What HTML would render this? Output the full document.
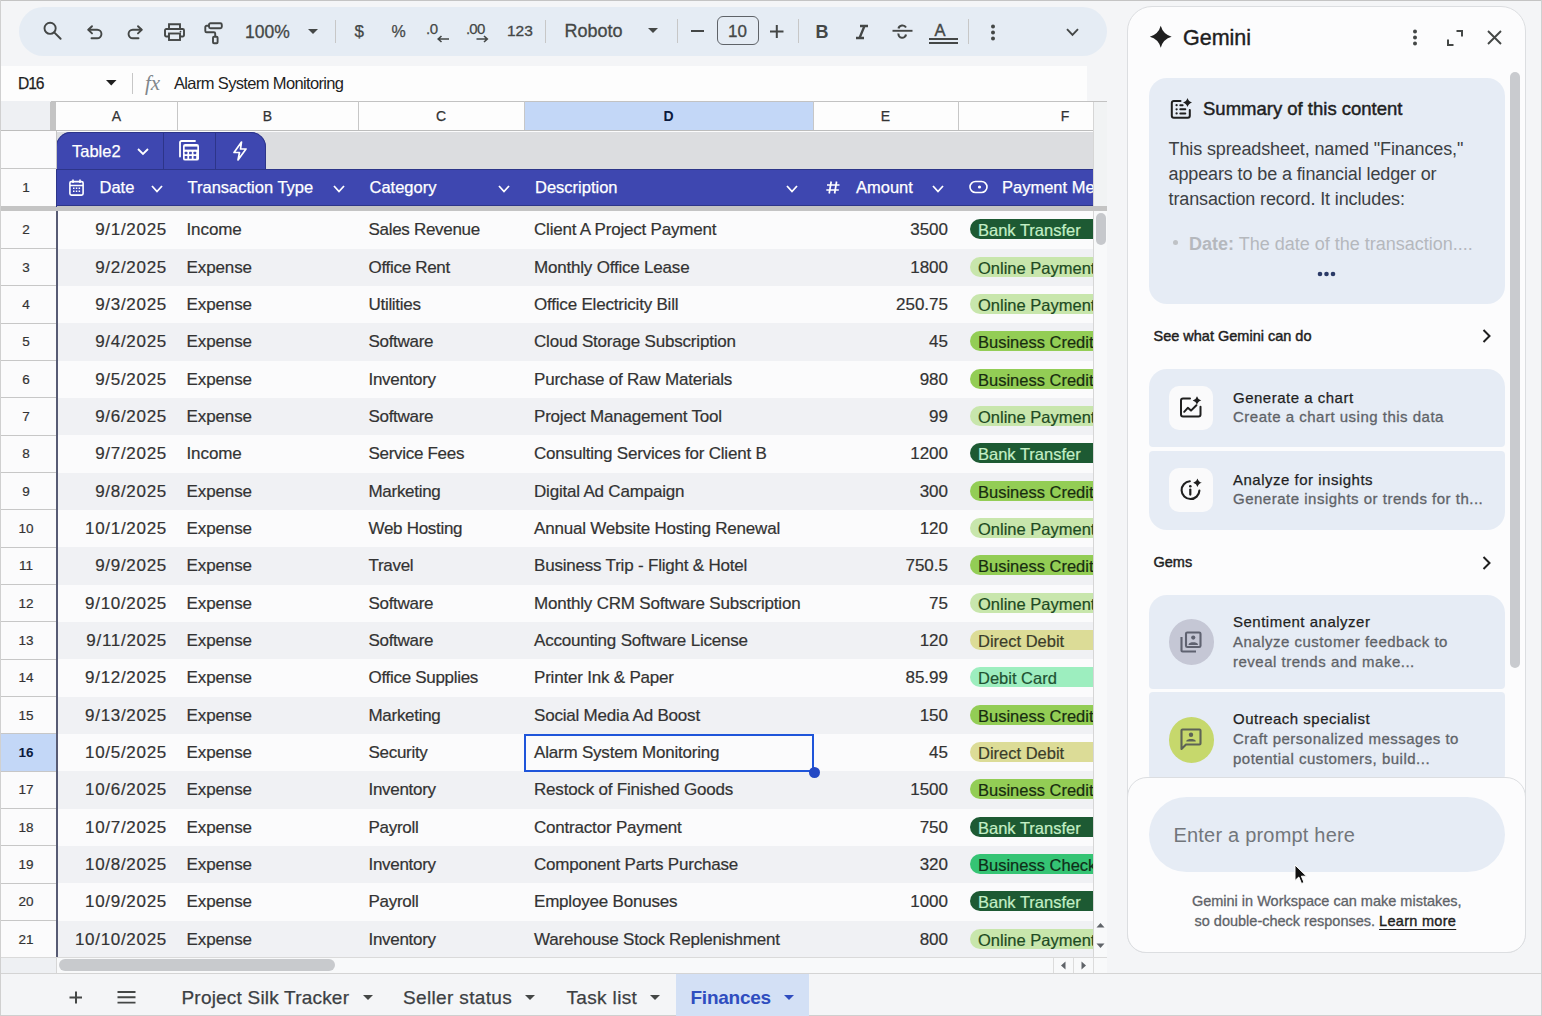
<!DOCTYPE html>
<html><head><meta charset="utf-8"><title>Finances</title>
<style>
*{box-sizing:border-box;margin:0;padding:0}
html,body{width:1542px;height:1016px;overflow:hidden}
body{position:relative;background:#f4f5f7;font-family:"Liberation Sans",sans-serif;color:#333}
.abs{position:absolute}
.t{position:absolute;white-space:nowrap;line-height:1}
svg{position:absolute;overflow:visible}
.med{-webkit-text-stroke:0.25px currentColor}
.d{-webkit-text-stroke:0.2px #333}
</style></head><body>

<div class="abs" style="left:0;top:0;width:1542px;height:1px;background:#c4c4c4"></div>
<div class="abs" style="left:0;top:0;width:1px;height:1016px;background:#d0d0d0"></div>
<div class="abs" style="left:1541px;top:0;width:1px;height:1016px;background:#d0d0d0"></div>
<div class="abs" style="left:19px;top:7px;width:1088px;height:49px;border-radius:25px;background:#e5ecf4"></div>
<div class="abs" style="left:1px;top:66px;width:1086px;height:35px;background:#fdfdfd"></div>
<div class="t med" style="left:17.5px;top:74.5px;font-size:17px;color:#1f1f1f;letter-spacing:-1.2px;transform:scaleX(0.92);transform-origin:0 0">D16</div>
<svg style="left:106px;top:80px" width="11" height="6"><path d="M0 0H10.5L5.25 5.5Z" fill="#1f1f1f"/></svg>
<div class="abs" style="left:131.5px;top:73px;width:1px;height:21px;background:#c7c7c7"></div>
<div class="t" style="left:145px;top:73px;font-family:'Liberation Serif',serif;font-style:italic;font-size:21px;color:#80868b">fx</div>
<div class="t" style="left:174px;top:74.5px;font-size:16.5px;color:#1f1f1f;letter-spacing:-0.65px">Alarm System Monitoring</div>
<div class="abs" style="left:1px;top:101px;width:1106px;height:1px;background:#c2c2c2"></div>
<div class="abs" style="left:1px;top:101px;width:50px;height:30px;background:#eef0f3"></div>
<div class="abs" style="left:50.2px;top:102px;width:5.4px;height:29px;background:#c4c4c4"></div>
<div class="abs" style="left:56px;top:102px;width:1037px;height:29px;background:#fdfdfd"></div>
<div class="abs" style="left:524px;top:102px;width:289px;height:29px;background:#c3d7f7"></div>
<div class="t" style="left:56px;width:121px;top:109px;text-align:center;font-size:14px;color:#333;-webkit-text-stroke:0.25px #333">A</div>
<div class="abs" style="left:176.5px;top:101px;width:1px;height:30px;background:#c7c7c7"></div>
<div class="t" style="left:177px;width:181px;top:109px;text-align:center;font-size:14px;color:#333;-webkit-text-stroke:0.25px #333">B</div>
<div class="abs" style="left:357.5px;top:101px;width:1px;height:30px;background:#c7c7c7"></div>
<div class="t" style="left:358px;width:166px;top:109px;text-align:center;font-size:14px;color:#333;-webkit-text-stroke:0.25px #333">C</div>
<div class="abs" style="left:523.5px;top:101px;width:1px;height:30px;background:#c7c7c7"></div>
<div class="t" style="left:524px;width:289px;top:109px;text-align:center;font-size:14px;font-weight:bold;color:#0b1a3d">D</div>
<div class="abs" style="left:812.5px;top:101px;width:1px;height:30px;background:#c7c7c7"></div>
<div class="t" style="left:813px;width:145px;top:109px;text-align:center;font-size:14px;color:#333;-webkit-text-stroke:0.25px #333">E</div>
<div class="abs" style="left:957.5px;top:101px;width:1px;height:30px;background:#c7c7c7"></div>
<div class="t" style="left:1045px;width:40px;top:109px;text-align:center;font-size:14px;color:#333;-webkit-text-stroke:0.25px #333">F</div>
<div class="abs" style="left:1px;top:130px;width:1106px;height:1.5px;background:#bdbdbd"></div>
<div class="abs" style="left:1px;top:131px;width:1092px;height:826px;background:#fbfbfc"></div>
<div class="abs" style="left:56px;top:131.5px;width:1037px;height:37px;background:#dcdde0"></div>
<div class="abs" style="left:1px;top:131.5px;width:50px;height:37px;background:#fbfbfc"></div>
<div class="abs" style="left:51px;top:131px;width:5px;height:826px;background:#fbfbfc"></div>
<div class="abs" style="left:56px;top:131.5px;width:210px;height:38px;border-radius:15px 15px 0 0;background:#3e47b0;box-shadow:inset 0 0 0 1px #2d3589"></div>
<div class="abs" style="left:163px;top:132px;width:1px;height:37px;background:#2d3589"></div>
<div class="abs" style="left:214.5px;top:132px;width:1px;height:37px;background:#2d3589"></div>
<div class="t med" style="left:72px;top:143px;font-size:16.5px;color:#fff">Table2</div>
<svg style="left:137px;top:148px" width="12" height="8"><path d="M1 1L6 6L11 1" stroke="#fff" stroke-width="1.8" fill="none"/></svg>
<svg style="left:178px;top:139px" width="22" height="23" viewBox="0 0 22 23"><path d="M2 17.6V3.6A1.6 1.6 0 0 1 3.6 2H17" stroke="#fff" stroke-width="1.8" fill="none" stroke-linecap="round"/><rect x="5" y="5" width="16" height="16.6" rx="2.2" fill="#fff"/><rect x="6.7" y="7.6" width="12.6" height="3" fill="#3e47b0"/><rect x="6.7" y="12.7" width="2.7" height="2.6" rx="0.5" fill="#3e47b0"/><rect x="11.1" y="12.7" width="2.7" height="2.6" rx="0.5" fill="#3e47b0"/><rect x="15.5" y="12.7" width="2.7" height="2.6" rx="0.5" fill="#3e47b0"/><rect x="6.7" y="17.1" width="2.7" height="2.6" rx="0.5" fill="#3e47b0"/><rect x="11.1" y="17.1" width="2.7" height="2.6" rx="0.5" fill="#3e47b0"/><rect x="15.5" y="17.1" width="2.7" height="2.6" rx="0.5" fill="#3e47b0"/></svg>
<svg style="left:232px;top:141px" width="16" height="20" viewBox="0 0 16 20"><path d="M9.5 1L2 11.5H7.5L6 19L14 8H8.5L9.5 1Z" stroke="#fff" stroke-width="1.7" fill="none" stroke-linejoin="round"/></svg>
<div class="abs" style="left:56px;top:168.5px;width:1037px;height:38px;background:#3e47b0"></div>
<div class="abs" style="left:56px;top:168.5px;width:1037px;height:1px;background:#2d3589"></div>
<div class="abs" style="left:56px;top:205px;width:1037px;height:1px;background:#2d3589"></div>
<div class="abs" style="left:1px;top:206px;width:1106px;height:5.3px;background:#c4c4c4"></div>
<svg style="left:69px;top:179px" width="15" height="17" viewBox="0 0 15 17"><rect x="0.9" y="2.6" width="13.2" height="13.5" rx="1.5" stroke="#fff" stroke-width="1.6" fill="none"/><path d="M1 6.5H14M4 0.5V4M11 0.5V4" stroke="#fff" stroke-width="1.6"/><path d="M4 9.3h1.5M6.8 9.3h1.5M9.6 9.3h1.5M4 12.3h1.5M6.8 12.3h1.5M9.6 12.3h1.5" stroke="#fff" stroke-width="1.4"/></svg>
<div class="t med" style="left:99.5px;top:179px;font-size:16.5px;color:#fff">Date</div>
<svg style="left:150.5px;top:185px" width="12" height="8"><path d="M1 1L6.0 6.5L11 1" stroke="#fff" stroke-width="1.8" fill="none"/></svg>
<div class="t med" style="left:187.5px;top:179px;font-size:16.5px;color:#fff">Transaction Type</div>
<svg style="left:333px;top:185px" width="12" height="8"><path d="M1 1L6.0 6.5L11 1" stroke="#fff" stroke-width="1.8" fill="none"/></svg>
<div class="t med" style="left:369.5px;top:179px;font-size:16.5px;color:#fff">Category</div>
<svg style="left:498px;top:185px" width="12" height="8"><path d="M1 1L6.0 6.5L11 1" stroke="#fff" stroke-width="1.8" fill="none"/></svg>
<div class="t med" style="left:535px;top:179px;font-size:16.5px;color:#fff">Description</div>
<svg style="left:786px;top:185px" width="12" height="8"><path d="M1 1L6.0 6.5L11 1" stroke="#fff" stroke-width="1.8" fill="none"/></svg>
<div class="t med" style="left:856px;top:179px;font-size:16.5px;color:#fff">Amount</div>
<svg style="left:932px;top:185px" width="12" height="8"><path d="M1 1L6.0 6.5L11 1" stroke="#fff" stroke-width="1.8" fill="none"/></svg>
<div class="t med" style="left:1002px;top:179px;font-size:16.5px;color:#fff;width:91px;overflow:hidden">Payment Method</div>
<svg style="left:826px;top:181px" width="14" height="13" viewBox="0 0 14 13"><path d="M5.2 0.5L3.2 12.5M10.6 0.5L8.6 12.5M1 4H13.5M0.3 9H12.8" stroke="#fff" stroke-width="1.7"/></svg>
<svg style="left:969px;top:180px" width="19" height="14" viewBox="0 0 19 14"><rect x="1" y="1.5" width="17" height="11" rx="5.5" stroke="#fff" stroke-width="1.6" fill="none"/><circle cx="10.5" cy="7" r="1.6" fill="#fff"/></svg>
<div class="abs" style="left:58px;top:211.30px;width:1035px;height:37.33px;background:#fbfbfc"></div>
<div class="abs" style="left:58px;top:248.63px;width:1035px;height:37.33px;background:#f0f1f4"></div>
<div class="abs" style="left:58px;top:285.96px;width:1035px;height:37.33px;background:#fbfbfc"></div>
<div class="abs" style="left:58px;top:323.29px;width:1035px;height:37.33px;background:#f0f1f4"></div>
<div class="abs" style="left:58px;top:360.62px;width:1035px;height:37.33px;background:#fbfbfc"></div>
<div class="abs" style="left:58px;top:397.95px;width:1035px;height:37.33px;background:#f0f1f4"></div>
<div class="abs" style="left:58px;top:435.28px;width:1035px;height:37.33px;background:#fbfbfc"></div>
<div class="abs" style="left:58px;top:472.61px;width:1035px;height:37.33px;background:#f0f1f4"></div>
<div class="abs" style="left:58px;top:509.94px;width:1035px;height:37.33px;background:#fbfbfc"></div>
<div class="abs" style="left:58px;top:547.27px;width:1035px;height:37.33px;background:#f0f1f4"></div>
<div class="abs" style="left:58px;top:584.60px;width:1035px;height:37.33px;background:#fbfbfc"></div>
<div class="abs" style="left:58px;top:621.93px;width:1035px;height:37.33px;background:#f0f1f4"></div>
<div class="abs" style="left:58px;top:659.26px;width:1035px;height:37.33px;background:#fbfbfc"></div>
<div class="abs" style="left:58px;top:696.59px;width:1035px;height:37.33px;background:#f0f1f4"></div>
<div class="abs" style="left:58px;top:733.92px;width:1035px;height:37.33px;background:#fbfbfc"></div>
<div class="abs" style="left:58px;top:771.25px;width:1035px;height:37.33px;background:#f0f1f4"></div>
<div class="abs" style="left:58px;top:808.58px;width:1035px;height:37.33px;background:#fbfbfc"></div>
<div class="abs" style="left:58px;top:845.91px;width:1035px;height:37.33px;background:#f0f1f4"></div>
<div class="abs" style="left:58px;top:883.24px;width:1035px;height:37.33px;background:#fbfbfc"></div>
<div class="abs" style="left:58px;top:920.57px;width:1035px;height:37.33px;background:#f0f1f4"></div>
<div class="t d" style="left:56px;width:111px;text-align:right;top:221.30px;font-size:17px;letter-spacing:0.7px">9/1/2025</div>
<div class="t d" style="left:186.5px;top:221.30px;font-size:17px;letter-spacing:-0.1px">Income</div>
<div class="t d" style="left:368.5px;top:221.30px;font-size:17px;letter-spacing:-0.3px">Sales Revenue</div>
<div class="t d" style="left:534px;top:221.30px;font-size:17px;letter-spacing:-0.2px">Client A Project Payment</div>
<div class="t d" style="left:813px;width:135px;text-align:right;top:221.30px;font-size:17px">3500</div>
<div class="abs" style="left:970px;top:219.30px;width:123px;height:20px;border-radius:10px 0 0 10px;background:#1d5a33;overflow:hidden"><div class="t" style="left:8px;top:3px;font-size:16.5px;color:#c4efc6;-webkit-text-stroke:0.2px #c4efc6">Bank Transfer</div></div>
<div class="t d" style="left:56px;width:111px;text-align:right;top:258.63px;font-size:17px;letter-spacing:0.7px">9/2/2025</div>
<div class="t d" style="left:186.5px;top:258.63px;font-size:17px;letter-spacing:-0.1px">Expense</div>
<div class="t d" style="left:368.5px;top:258.63px;font-size:17px;letter-spacing:-0.3px">Office Rent</div>
<div class="t d" style="left:534px;top:258.63px;font-size:17px;letter-spacing:-0.2px">Monthly Office Lease</div>
<div class="t d" style="left:813px;width:135px;text-align:right;top:258.63px;font-size:17px">1800</div>
<div class="abs" style="left:970px;top:256.63px;width:123px;height:20px;border-radius:10px 0 0 10px;background:#c8e6ac;overflow:hidden"><div class="t" style="left:8px;top:3px;font-size:16.5px;color:#1d4a22;-webkit-text-stroke:0.2px #1d4a22">Online Payment</div></div>
<div class="t d" style="left:56px;width:111px;text-align:right;top:295.96px;font-size:17px;letter-spacing:0.7px">9/3/2025</div>
<div class="t d" style="left:186.5px;top:295.96px;font-size:17px;letter-spacing:-0.1px">Expense</div>
<div class="t d" style="left:368.5px;top:295.96px;font-size:17px;letter-spacing:-0.3px">Utilities</div>
<div class="t d" style="left:534px;top:295.96px;font-size:17px;letter-spacing:-0.2px">Office Electricity Bill</div>
<div class="t d" style="left:813px;width:135px;text-align:right;top:295.96px;font-size:17px">250.75</div>
<div class="abs" style="left:970px;top:293.96px;width:123px;height:20px;border-radius:10px 0 0 10px;background:#c8e6ac;overflow:hidden"><div class="t" style="left:8px;top:3px;font-size:16.5px;color:#1d4a22;-webkit-text-stroke:0.2px #1d4a22">Online Payment</div></div>
<div class="t d" style="left:56px;width:111px;text-align:right;top:333.29px;font-size:17px;letter-spacing:0.7px">9/4/2025</div>
<div class="t d" style="left:186.5px;top:333.29px;font-size:17px;letter-spacing:-0.1px">Expense</div>
<div class="t d" style="left:368.5px;top:333.29px;font-size:17px;letter-spacing:-0.3px">Software</div>
<div class="t d" style="left:534px;top:333.29px;font-size:17px;letter-spacing:-0.2px">Cloud Storage Subscription</div>
<div class="t d" style="left:813px;width:135px;text-align:right;top:333.29px;font-size:17px">45</div>
<div class="abs" style="left:970px;top:331.29px;width:123px;height:20px;border-radius:10px 0 0 10px;background:#93cd55;overflow:hidden"><div class="t" style="left:8px;top:3px;font-size:16.5px;color:#182c10;-webkit-text-stroke:0.2px #182c10">Business Credit</div></div>
<div class="t d" style="left:56px;width:111px;text-align:right;top:370.62px;font-size:17px;letter-spacing:0.7px">9/5/2025</div>
<div class="t d" style="left:186.5px;top:370.62px;font-size:17px;letter-spacing:-0.1px">Expense</div>
<div class="t d" style="left:368.5px;top:370.62px;font-size:17px;letter-spacing:-0.3px">Inventory</div>
<div class="t d" style="left:534px;top:370.62px;font-size:17px;letter-spacing:-0.2px">Purchase of Raw Materials</div>
<div class="t d" style="left:813px;width:135px;text-align:right;top:370.62px;font-size:17px">980</div>
<div class="abs" style="left:970px;top:368.62px;width:123px;height:20px;border-radius:10px 0 0 10px;background:#93cd55;overflow:hidden"><div class="t" style="left:8px;top:3px;font-size:16.5px;color:#182c10;-webkit-text-stroke:0.2px #182c10">Business Credit</div></div>
<div class="t d" style="left:56px;width:111px;text-align:right;top:407.95px;font-size:17px;letter-spacing:0.7px">9/6/2025</div>
<div class="t d" style="left:186.5px;top:407.95px;font-size:17px;letter-spacing:-0.1px">Expense</div>
<div class="t d" style="left:368.5px;top:407.95px;font-size:17px;letter-spacing:-0.3px">Software</div>
<div class="t d" style="left:534px;top:407.95px;font-size:17px;letter-spacing:-0.2px">Project Management Tool</div>
<div class="t d" style="left:813px;width:135px;text-align:right;top:407.95px;font-size:17px">99</div>
<div class="abs" style="left:970px;top:405.95px;width:123px;height:20px;border-radius:10px 0 0 10px;background:#c8e6ac;overflow:hidden"><div class="t" style="left:8px;top:3px;font-size:16.5px;color:#1d4a22;-webkit-text-stroke:0.2px #1d4a22">Online Payment</div></div>
<div class="t d" style="left:56px;width:111px;text-align:right;top:445.28px;font-size:17px;letter-spacing:0.7px">9/7/2025</div>
<div class="t d" style="left:186.5px;top:445.28px;font-size:17px;letter-spacing:-0.1px">Income</div>
<div class="t d" style="left:368.5px;top:445.28px;font-size:17px;letter-spacing:-0.3px">Service Fees</div>
<div class="t d" style="left:534px;top:445.28px;font-size:17px;letter-spacing:-0.2px">Consulting Services for Client B</div>
<div class="t d" style="left:813px;width:135px;text-align:right;top:445.28px;font-size:17px">1200</div>
<div class="abs" style="left:970px;top:443.28px;width:123px;height:20px;border-radius:10px 0 0 10px;background:#1d5a33;overflow:hidden"><div class="t" style="left:8px;top:3px;font-size:16.5px;color:#c4efc6;-webkit-text-stroke:0.2px #c4efc6">Bank Transfer</div></div>
<div class="t d" style="left:56px;width:111px;text-align:right;top:482.61px;font-size:17px;letter-spacing:0.7px">9/8/2025</div>
<div class="t d" style="left:186.5px;top:482.61px;font-size:17px;letter-spacing:-0.1px">Expense</div>
<div class="t d" style="left:368.5px;top:482.61px;font-size:17px;letter-spacing:-0.3px">Marketing</div>
<div class="t d" style="left:534px;top:482.61px;font-size:17px;letter-spacing:-0.2px">Digital Ad Campaign</div>
<div class="t d" style="left:813px;width:135px;text-align:right;top:482.61px;font-size:17px">300</div>
<div class="abs" style="left:970px;top:480.61px;width:123px;height:20px;border-radius:10px 0 0 10px;background:#93cd55;overflow:hidden"><div class="t" style="left:8px;top:3px;font-size:16.5px;color:#182c10;-webkit-text-stroke:0.2px #182c10">Business Credit</div></div>
<div class="t d" style="left:56px;width:111px;text-align:right;top:519.94px;font-size:17px;letter-spacing:0.7px">10/1/2025</div>
<div class="t d" style="left:186.5px;top:519.94px;font-size:17px;letter-spacing:-0.1px">Expense</div>
<div class="t d" style="left:368.5px;top:519.94px;font-size:17px;letter-spacing:-0.3px">Web Hosting</div>
<div class="t d" style="left:534px;top:519.94px;font-size:17px;letter-spacing:-0.2px">Annual Website Hosting Renewal</div>
<div class="t d" style="left:813px;width:135px;text-align:right;top:519.94px;font-size:17px">120</div>
<div class="abs" style="left:970px;top:517.94px;width:123px;height:20px;border-radius:10px 0 0 10px;background:#c8e6ac;overflow:hidden"><div class="t" style="left:8px;top:3px;font-size:16.5px;color:#1d4a22;-webkit-text-stroke:0.2px #1d4a22">Online Payment</div></div>
<div class="t d" style="left:56px;width:111px;text-align:right;top:557.27px;font-size:17px;letter-spacing:0.7px">9/9/2025</div>
<div class="t d" style="left:186.5px;top:557.27px;font-size:17px;letter-spacing:-0.1px">Expense</div>
<div class="t d" style="left:368.5px;top:557.27px;font-size:17px;letter-spacing:-0.3px">Travel</div>
<div class="t d" style="left:534px;top:557.27px;font-size:17px;letter-spacing:-0.2px">Business Trip - Flight &amp; Hotel</div>
<div class="t d" style="left:813px;width:135px;text-align:right;top:557.27px;font-size:17px">750.5</div>
<div class="abs" style="left:970px;top:555.27px;width:123px;height:20px;border-radius:10px 0 0 10px;background:#93cd55;overflow:hidden"><div class="t" style="left:8px;top:3px;font-size:16.5px;color:#182c10;-webkit-text-stroke:0.2px #182c10">Business Credit</div></div>
<div class="t d" style="left:56px;width:111px;text-align:right;top:594.60px;font-size:17px;letter-spacing:0.7px">9/10/2025</div>
<div class="t d" style="left:186.5px;top:594.60px;font-size:17px;letter-spacing:-0.1px">Expense</div>
<div class="t d" style="left:368.5px;top:594.60px;font-size:17px;letter-spacing:-0.3px">Software</div>
<div class="t d" style="left:534px;top:594.60px;font-size:17px;letter-spacing:-0.2px">Monthly CRM Software Subscription</div>
<div class="t d" style="left:813px;width:135px;text-align:right;top:594.60px;font-size:17px">75</div>
<div class="abs" style="left:970px;top:592.60px;width:123px;height:20px;border-radius:10px 0 0 10px;background:#c8e6ac;overflow:hidden"><div class="t" style="left:8px;top:3px;font-size:16.5px;color:#1d4a22;-webkit-text-stroke:0.2px #1d4a22">Online Payment</div></div>
<div class="t d" style="left:56px;width:111px;text-align:right;top:631.93px;font-size:17px;letter-spacing:0.7px">9/11/2025</div>
<div class="t d" style="left:186.5px;top:631.93px;font-size:17px;letter-spacing:-0.1px">Expense</div>
<div class="t d" style="left:368.5px;top:631.93px;font-size:17px;letter-spacing:-0.3px">Software</div>
<div class="t d" style="left:534px;top:631.93px;font-size:17px;letter-spacing:-0.2px">Accounting Software License</div>
<div class="t d" style="left:813px;width:135px;text-align:right;top:631.93px;font-size:17px">120</div>
<div class="abs" style="left:970px;top:629.93px;width:123px;height:20px;border-radius:10px 0 0 10px;background:#dcdc97;overflow:hidden"><div class="t" style="left:8px;top:3px;font-size:16.5px;color:#3b3d2a;-webkit-text-stroke:0.2px #3b3d2a">Direct Debit</div></div>
<div class="t d" style="left:56px;width:111px;text-align:right;top:669.26px;font-size:17px;letter-spacing:0.7px">9/12/2025</div>
<div class="t d" style="left:186.5px;top:669.26px;font-size:17px;letter-spacing:-0.1px">Expense</div>
<div class="t d" style="left:368.5px;top:669.26px;font-size:17px;letter-spacing:-0.3px">Office Supplies</div>
<div class="t d" style="left:534px;top:669.26px;font-size:17px;letter-spacing:-0.2px">Printer Ink &amp; Paper</div>
<div class="t d" style="left:813px;width:135px;text-align:right;top:669.26px;font-size:17px">85.99</div>
<div class="abs" style="left:970px;top:667.26px;width:123px;height:20px;border-radius:10px 0 0 10px;background:#9deebf;overflow:hidden"><div class="t" style="left:8px;top:3px;font-size:16.5px;color:#1f5232;-webkit-text-stroke:0.2px #1f5232">Debit Card</div></div>
<div class="t d" style="left:56px;width:111px;text-align:right;top:706.59px;font-size:17px;letter-spacing:0.7px">9/13/2025</div>
<div class="t d" style="left:186.5px;top:706.59px;font-size:17px;letter-spacing:-0.1px">Expense</div>
<div class="t d" style="left:368.5px;top:706.59px;font-size:17px;letter-spacing:-0.3px">Marketing</div>
<div class="t d" style="left:534px;top:706.59px;font-size:17px;letter-spacing:-0.2px">Social Media Ad Boost</div>
<div class="t d" style="left:813px;width:135px;text-align:right;top:706.59px;font-size:17px">150</div>
<div class="abs" style="left:970px;top:704.59px;width:123px;height:20px;border-radius:10px 0 0 10px;background:#93cd55;overflow:hidden"><div class="t" style="left:8px;top:3px;font-size:16.5px;color:#182c10;-webkit-text-stroke:0.2px #182c10">Business Credit</div></div>
<div class="t d" style="left:56px;width:111px;text-align:right;top:743.92px;font-size:17px;letter-spacing:0.7px">10/5/2025</div>
<div class="t d" style="left:186.5px;top:743.92px;font-size:17px;letter-spacing:-0.1px">Expense</div>
<div class="t d" style="left:368.5px;top:743.92px;font-size:17px;letter-spacing:-0.3px">Security</div>
<div class="t d" style="left:534px;top:743.92px;font-size:17px;letter-spacing:-0.2px">Alarm System Monitoring</div>
<div class="t d" style="left:813px;width:135px;text-align:right;top:743.92px;font-size:17px">45</div>
<div class="abs" style="left:970px;top:741.92px;width:123px;height:20px;border-radius:10px 0 0 10px;background:#dcdc97;overflow:hidden"><div class="t" style="left:8px;top:3px;font-size:16.5px;color:#3b3d2a;-webkit-text-stroke:0.2px #3b3d2a">Direct Debit</div></div>
<div class="t d" style="left:56px;width:111px;text-align:right;top:781.25px;font-size:17px;letter-spacing:0.7px">10/6/2025</div>
<div class="t d" style="left:186.5px;top:781.25px;font-size:17px;letter-spacing:-0.1px">Expense</div>
<div class="t d" style="left:368.5px;top:781.25px;font-size:17px;letter-spacing:-0.3px">Inventory</div>
<div class="t d" style="left:534px;top:781.25px;font-size:17px;letter-spacing:-0.2px">Restock of Finished Goods</div>
<div class="t d" style="left:813px;width:135px;text-align:right;top:781.25px;font-size:17px">1500</div>
<div class="abs" style="left:970px;top:779.25px;width:123px;height:20px;border-radius:10px 0 0 10px;background:#93cd55;overflow:hidden"><div class="t" style="left:8px;top:3px;font-size:16.5px;color:#182c10;-webkit-text-stroke:0.2px #182c10">Business Credit</div></div>
<div class="t d" style="left:56px;width:111px;text-align:right;top:818.58px;font-size:17px;letter-spacing:0.7px">10/7/2025</div>
<div class="t d" style="left:186.5px;top:818.58px;font-size:17px;letter-spacing:-0.1px">Expense</div>
<div class="t d" style="left:368.5px;top:818.58px;font-size:17px;letter-spacing:-0.3px">Payroll</div>
<div class="t d" style="left:534px;top:818.58px;font-size:17px;letter-spacing:-0.2px">Contractor Payment</div>
<div class="t d" style="left:813px;width:135px;text-align:right;top:818.58px;font-size:17px">750</div>
<div class="abs" style="left:970px;top:816.58px;width:123px;height:20px;border-radius:10px 0 0 10px;background:#1d5a33;overflow:hidden"><div class="t" style="left:8px;top:3px;font-size:16.5px;color:#c4efc6;-webkit-text-stroke:0.2px #c4efc6">Bank Transfer</div></div>
<div class="t d" style="left:56px;width:111px;text-align:right;top:855.91px;font-size:17px;letter-spacing:0.7px">10/8/2025</div>
<div class="t d" style="left:186.5px;top:855.91px;font-size:17px;letter-spacing:-0.1px">Expense</div>
<div class="t d" style="left:368.5px;top:855.91px;font-size:17px;letter-spacing:-0.3px">Inventory</div>
<div class="t d" style="left:534px;top:855.91px;font-size:17px;letter-spacing:-0.2px">Component Parts Purchase</div>
<div class="t d" style="left:813px;width:135px;text-align:right;top:855.91px;font-size:17px">320</div>
<div class="abs" style="left:970px;top:853.91px;width:123px;height:20px;border-radius:10px 0 0 10px;background:#35c474;overflow:hidden"><div class="t" style="left:8px;top:3px;font-size:16.5px;color:#0f2e18;-webkit-text-stroke:0.2px #0f2e18">Business Check</div></div>
<div class="t d" style="left:56px;width:111px;text-align:right;top:893.24px;font-size:17px;letter-spacing:0.7px">10/9/2025</div>
<div class="t d" style="left:186.5px;top:893.24px;font-size:17px;letter-spacing:-0.1px">Expense</div>
<div class="t d" style="left:368.5px;top:893.24px;font-size:17px;letter-spacing:-0.3px">Payroll</div>
<div class="t d" style="left:534px;top:893.24px;font-size:17px;letter-spacing:-0.2px">Employee Bonuses</div>
<div class="t d" style="left:813px;width:135px;text-align:right;top:893.24px;font-size:17px">1000</div>
<div class="abs" style="left:970px;top:891.24px;width:123px;height:20px;border-radius:10px 0 0 10px;background:#1d5a33;overflow:hidden"><div class="t" style="left:8px;top:3px;font-size:16.5px;color:#c4efc6;-webkit-text-stroke:0.2px #c4efc6">Bank Transfer</div></div>
<div class="t d" style="left:56px;width:111px;text-align:right;top:930.57px;font-size:17px;letter-spacing:0.7px">10/10/2025</div>
<div class="t d" style="left:186.5px;top:930.57px;font-size:17px;letter-spacing:-0.1px">Expense</div>
<div class="t d" style="left:368.5px;top:930.57px;font-size:17px;letter-spacing:-0.3px">Inventory</div>
<div class="t d" style="left:534px;top:930.57px;font-size:17px;letter-spacing:-0.2px">Warehouse Stock Replenishment</div>
<div class="t d" style="left:813px;width:135px;text-align:right;top:930.57px;font-size:17px">800</div>
<div class="abs" style="left:970px;top:928.57px;width:123px;height:20px;border-radius:10px 0 0 10px;background:#c8e6ac;overflow:hidden"><div class="t" style="left:8px;top:3px;font-size:16.5px;color:#1d4a22;-webkit-text-stroke:0.2px #1d4a22">Online Payment</div></div>
<div class="abs" style="left:1093px;top:211.3px;width:14px;height:746px;background:#f8f9fa;border-left:1px solid #d6d6d6"></div>
<div class="abs" style="left:1095.5px;top:213px;width:10px;height:32px;border-radius:5px;background:#c6c8cc"></div>
<div class="abs" style="left:1093px;top:102px;width:14px;height:104px;background:#f1f3f4;border-left:1px solid #d6d6d6"></div>
<div class="t" style="left:1px;width:50px;text-align:center;top:180.50px;font-size:13.5px;color:#333;-webkit-text-stroke:0.2px #333">1</div>
<div class="t" style="left:1px;width:50px;text-align:center;top:223.30px;font-size:13.5px;color:#333;-webkit-text-stroke:0.2px #333">2</div>
<div class="abs" style="left:1px;top:248.13px;width:55px;height:1px;background:#c7c7c7"></div>
<div class="t" style="left:1px;width:50px;text-align:center;top:260.63px;font-size:13.5px;color:#333;-webkit-text-stroke:0.2px #333">3</div>
<div class="abs" style="left:1px;top:285.46px;width:55px;height:1px;background:#c7c7c7"></div>
<div class="t" style="left:1px;width:50px;text-align:center;top:297.96px;font-size:13.5px;color:#333;-webkit-text-stroke:0.2px #333">4</div>
<div class="abs" style="left:1px;top:322.79px;width:55px;height:1px;background:#c7c7c7"></div>
<div class="t" style="left:1px;width:50px;text-align:center;top:335.29px;font-size:13.5px;color:#333;-webkit-text-stroke:0.2px #333">5</div>
<div class="abs" style="left:1px;top:360.12px;width:55px;height:1px;background:#c7c7c7"></div>
<div class="t" style="left:1px;width:50px;text-align:center;top:372.62px;font-size:13.5px;color:#333;-webkit-text-stroke:0.2px #333">6</div>
<div class="abs" style="left:1px;top:397.45px;width:55px;height:1px;background:#c7c7c7"></div>
<div class="t" style="left:1px;width:50px;text-align:center;top:409.95px;font-size:13.5px;color:#333;-webkit-text-stroke:0.2px #333">7</div>
<div class="abs" style="left:1px;top:434.78px;width:55px;height:1px;background:#c7c7c7"></div>
<div class="t" style="left:1px;width:50px;text-align:center;top:447.28px;font-size:13.5px;color:#333;-webkit-text-stroke:0.2px #333">8</div>
<div class="abs" style="left:1px;top:472.11px;width:55px;height:1px;background:#c7c7c7"></div>
<div class="t" style="left:1px;width:50px;text-align:center;top:484.61px;font-size:13.5px;color:#333;-webkit-text-stroke:0.2px #333">9</div>
<div class="abs" style="left:1px;top:509.44px;width:55px;height:1px;background:#c7c7c7"></div>
<div class="t" style="left:1px;width:50px;text-align:center;top:521.94px;font-size:13.5px;color:#333;-webkit-text-stroke:0.2px #333">10</div>
<div class="abs" style="left:1px;top:546.77px;width:55px;height:1px;background:#c7c7c7"></div>
<div class="t" style="left:1px;width:50px;text-align:center;top:559.27px;font-size:13.5px;color:#333;-webkit-text-stroke:0.2px #333">11</div>
<div class="abs" style="left:1px;top:584.10px;width:55px;height:1px;background:#c7c7c7"></div>
<div class="t" style="left:1px;width:50px;text-align:center;top:596.60px;font-size:13.5px;color:#333;-webkit-text-stroke:0.2px #333">12</div>
<div class="abs" style="left:1px;top:621.43px;width:55px;height:1px;background:#c7c7c7"></div>
<div class="t" style="left:1px;width:50px;text-align:center;top:633.93px;font-size:13.5px;color:#333;-webkit-text-stroke:0.2px #333">13</div>
<div class="abs" style="left:1px;top:658.76px;width:55px;height:1px;background:#c7c7c7"></div>
<div class="t" style="left:1px;width:50px;text-align:center;top:671.26px;font-size:13.5px;color:#333;-webkit-text-stroke:0.2px #333">14</div>
<div class="abs" style="left:1px;top:696.09px;width:55px;height:1px;background:#c7c7c7"></div>
<div class="t" style="left:1px;width:50px;text-align:center;top:708.59px;font-size:13.5px;color:#333;-webkit-text-stroke:0.2px #333">15</div>
<div class="abs" style="left:1px;top:733.42px;width:55px;height:1px;background:#c7c7c7"></div>
<div class="abs" style="left:1px;top:733.92px;width:55px;height:37.33px;background:#c3d7f7"></div>
<div class="t" style="left:1px;width:50px;text-align:center;top:745.92px;font-size:13.5px;font-weight:bold;color:#0b1a3d">16</div>
<div class="abs" style="left:1px;top:770.75px;width:55px;height:1px;background:#c7c7c7"></div>
<div class="t" style="left:1px;width:50px;text-align:center;top:783.25px;font-size:13.5px;color:#333;-webkit-text-stroke:0.2px #333">17</div>
<div class="abs" style="left:1px;top:808.08px;width:55px;height:1px;background:#c7c7c7"></div>
<div class="t" style="left:1px;width:50px;text-align:center;top:820.58px;font-size:13.5px;color:#333;-webkit-text-stroke:0.2px #333">18</div>
<div class="abs" style="left:1px;top:845.41px;width:55px;height:1px;background:#c7c7c7"></div>
<div class="t" style="left:1px;width:50px;text-align:center;top:857.91px;font-size:13.5px;color:#333;-webkit-text-stroke:0.2px #333">19</div>
<div class="abs" style="left:1px;top:882.74px;width:55px;height:1px;background:#c7c7c7"></div>
<div class="t" style="left:1px;width:50px;text-align:center;top:895.24px;font-size:13.5px;color:#333;-webkit-text-stroke:0.2px #333">20</div>
<div class="abs" style="left:1px;top:920.07px;width:55px;height:1px;background:#c7c7c7"></div>
<div class="t" style="left:1px;width:50px;text-align:center;top:932.57px;font-size:13.5px;color:#333;-webkit-text-stroke:0.2px #333">21</div>
<div class="abs" style="left:1px;top:957.40px;width:55px;height:1px;background:#c7c7c7"></div>
<div class="abs" style="left:1px;top:168px;width:55px;height:1px;background:#c7c7c7"></div>
<div class="abs" style="left:55.5px;top:131px;width:1px;height:80px;background:#c7c7c7"></div>
<div class="abs" style="left:56px;top:211px;width:2px;height:746px;background:#575b74"></div>
<div class="abs" style="left:56px;top:168.5px;width:1px;height:38px;background:#2d3589"></div>
<div class="abs" style="left:524px;top:733.92px;width:289.5px;height:38.33px;border:2.2px solid #1f55da"></div>
<div class="abs" style="left:808.6px;top:766.85px;width:11px;height:11px;border-radius:50%;background:#2449c4"></div>
<svg style="left:1096px;top:922px" width="9" height="6"><path d="M0.5 5.5L4.5 1L8.5 5.5Z" fill="#5f6368"/></svg>
<svg style="left:1096px;top:943px" width="9" height="6"><path d="M0.5 0.5L4.5 5L8.5 0.5Z" fill="#5f6368"/></svg>
<div class="abs" style="left:1px;top:957px;width:1106px;height:16px;background:#f8f9fa;border-top:1px solid #dadada"></div>
<div class="abs" style="left:1px;top:958px;width:55px;height:15px;background:#eef0f3"></div>
<div class="abs" style="left:56px;top:958px;width:1px;height:15px;background:#d6d6d6"></div>
<div class="abs" style="left:58.5px;top:959px;width:276px;height:11.5px;border-radius:6px;background:#c8cacd"></div>
<div class="abs" style="left:1053px;top:958px;width:1px;height:15px;background:#dcdcdc"></div>
<div class="abs" style="left:1073px;top:958px;width:1px;height:15px;background:#dcdcdc"></div>
<div class="abs" style="left:1093px;top:958px;width:1px;height:15px;background:#dcdcdc"></div>
<svg style="left:1060px;top:961px" width="6" height="9"><path d="M5.5 0.5L1 4.5L5.5 8.5Z" fill="#5f6368"/></svg>
<svg style="left:1081px;top:961px" width="6" height="9"><path d="M0.5 0.5L5 4.5L0.5 8.5Z" fill="#5f6368"/></svg>
<div class="abs" style="left:1px;top:973px;width:1540px;height:43px;background:#f4f5f7;border-top:1px solid #d4d4d4"></div>
<div class="abs" style="left:0;top:1015px;width:1542px;height:1px;background:#cfcfcf"></div>
<svg style="left:69px;top:990.5px" width="14" height="13"><path d="M7 0.5V12.5M0.5 6.5H13" stroke="#444746" stroke-width="2"/></svg>
<svg style="left:116.5px;top:991px" width="19" height="13"><path d="M0.5 1H18.5M0.5 6.3H18.5M0.5 11.6H18.5" stroke="#444746" stroke-width="1.9"/></svg>
<div class="t med" style="left:181.5px;top:987.9px;font-size:19px;color:#3c4043;letter-spacing:0.2px">Project Silk Tracker</div>
<svg style="left:362.5px;top:995px" width="11" height="6"><path d="M0 0H10L5 5Z" fill="#444746"/></svg>
<div class="t med" style="left:403px;top:987.9px;font-size:19px;color:#3c4043;letter-spacing:0.35px">Seller status</div>
<svg style="left:525px;top:995px" width="11" height="6"><path d="M0 0H10L5 5Z" fill="#444746"/></svg>
<div class="t med" style="left:566.5px;top:987.9px;font-size:19px;color:#3c4043;letter-spacing:0.35px">Task list</div>
<svg style="left:649.5px;top:995px" width="11" height="6"><path d="M0 0H10L5 5Z" fill="#444746"/></svg>
<div class="abs" style="left:676px;top:974px;width:133px;height:42px;background:#d3e0f5"></div>
<div class="t" style="left:690.5px;top:987.9px;font-size:19px;font-weight:bold;color:#2f4dbf;letter-spacing:-0.25px">Finances</div>
<svg style="left:783.5px;top:995px" width="11" height="6"><path d="M0 0H10L5 5Z" fill="#2f4dbf"/></svg>
<svg style="left:43px;top:22px" width="19" height="18" viewBox="0 0 19 18" stroke-linecap="round"><circle cx="7.1" cy="6.3" r="5.6" stroke="#444746" stroke-width="1.9" fill="none"/><path d="M11.2 10.4L17.6 16.8" stroke="#444746" stroke-width="2"/></svg>
<svg style="left:87px;top:25px" width="16" height="15" viewBox="0 0 16 15" stroke-linecap="round" stroke-linejoin="round"><path d="M5 1.2L1.3 4.8L5 8.4" stroke="#444746" stroke-width="1.9" fill="none"/><path d="M1.6 4.8H10.2A4.25 4.25 0 0 1 10.2 13.3H4.5" stroke="#444746" stroke-width="1.9" fill="none"/></svg>
<svg style="left:127px;top:25px" width="16" height="15" viewBox="0 0 16 15" stroke-linecap="round" stroke-linejoin="round"><path d="M11 1.2L14.7 4.8L11 8.4" stroke="#444746" stroke-width="1.9" fill="none"/><path d="M14.4 4.8H5.8A4.25 4.25 0 0 0 5.8 13.3H11.5" stroke="#444746" stroke-width="1.9" fill="none"/></svg>
<svg style="left:164px;top:23px" width="21" height="18" viewBox="0 0 21 18"><path d="M5 6V1.2H16V6" stroke="#444746" stroke-width="1.9" fill="none"/><path d="M5 13.5H2.2A1.2 1.2 0 0 1 1 12.3V7.3A1.3 1.3 0 0 1 2.3 6H18.7A1.3 1.3 0 0 1 20 7.3V12.3A1.2 1.2 0 0 1 18.8 13.5H16" stroke="#444746" stroke-width="1.9" fill="none"/><rect x="5" y="10.5" width="11" height="6.5" stroke="#444746" stroke-width="1.9" fill="none"/><circle cx="16.5" cy="8.6" r="0.9" fill="#444746"/></svg>
<svg style="left:204px;top:21.5px" width="19" height="22" viewBox="0 0 19 22" stroke-linejoin="round"><rect x="5" y="1.3" width="12.8" height="5" rx="1.5" stroke="#444746" stroke-width="1.9" fill="none"/><path d="M5 3.8H2.6A1.3 1.3 0 0 0 1.3 5.1V8.9A1.3 1.3 0 0 0 2.6 10.2H9.9A1.3 1.3 0 0 1 11.2 11.5V14.8" stroke="#444746" stroke-width="1.9" fill="none"/><rect x="9" y="14.8" width="4.6" height="6.4" rx="1" stroke="#444746" stroke-width="1.9" fill="none"/></svg>
<div class="t med" style="left:245px;top:24px;font-size:17.5px;color:#444746;-webkit-text-stroke:0.3px #444746">100%</div>
<svg style="left:308px;top:28.5px" width="11" height="6"><path d="M0 0H10L5 5Z" fill="#444746"/></svg>
<div class="abs" style="left:334.5px;top:19.5px;width:1px;height:23px;background:#c7c7c7"></div>
<div class="t med" style="left:354.5px;top:23px;font-size:17px;color:#444746">$</div>
<div class="t med" style="left:391.5px;top:24px;font-size:16px;color:#444746">%</div>
<div class="t med" style="left:426px;top:21px;font-size:15px;color:#444746;letter-spacing:-0.5px">.0</div>
<svg style="left:437px;top:35px" width="13" height="8"><path d="M12 4H1.5M4.5 1L1.2 4L4.5 7" stroke="#444746" stroke-width="1.6" fill="none"/></svg>
<div class="t med" style="left:466px;top:21px;font-size:15px;color:#444746;letter-spacing:-0.8px">.00</div>
<svg style="left:476px;top:35px" width="13" height="8"><path d="M0.5 4H11M8 1L11.3 4L8 7" stroke="#444746" stroke-width="1.6" fill="none"/></svg>
<div class="t med" style="left:507px;top:22.5px;font-size:15.5px;color:#444746;-webkit-text-stroke:0.3px #444746">123</div>
<div class="abs" style="left:545px;top:19.5px;width:1px;height:23px;background:#c7c7c7"></div>
<div class="t med" style="left:564.5px;top:21.5px;font-size:18px;color:#444746;-webkit-text-stroke:0.3px #444746">Roboto</div>
<svg style="left:648px;top:28px" width="11" height="6"><path d="M0 0H10L5 5Z" fill="#444746"/></svg>
<div class="abs" style="left:677px;top:19px;width:1px;height:24px;background:#c7c7c7"></div>
<div class="abs" style="left:690.5px;top:30px;width:13px;height:2px;background:#444746"></div>
<div class="abs" style="left:716.5px;top:16.3px;width:42px;height:29px;border:1.4px solid #5f6368;border-radius:6px"></div>
<div class="t" style="left:716.5px;width:42px;text-align:center;top:23px;font-size:17px;color:#444746;-webkit-text-stroke:0.3px #444746">10</div>
<svg style="left:770px;top:25px" width="14" height="13"><path d="M6.8 0V13M0 6.5H13.5" stroke="#444746" stroke-width="2"/></svg>
<div class="abs" style="left:797.5px;top:19px;width:1px;height:24px;background:#c7c7c7"></div>
<div class="t" style="left:815.5px;top:22.5px;font-size:18px;font-weight:bold;color:#444746">B</div>
<svg style="left:855px;top:25px" width="14" height="14" viewBox="0 0 14 14"><path d="M5 1H13M1 13H9M9.5 1L4.5 13" stroke="#444746" stroke-width="2.3" fill="none"/></svg>
<svg style="left:892px;top:23.5px" width="21" height="15" viewBox="0 0 21 15"><path d="M0.5 6.8H20.5" stroke="#444746" stroke-width="1.9"/><path d="M6.5 4.5A4 3.6 0 0 1 14 3.5" stroke="#444746" stroke-width="2.1" fill="none"/><path d="M6.5 9.5A3.6 3.6 0 0 0 14 10.5" stroke="#444746" stroke-width="2.1" fill="none"/></svg>
<div class="t med" style="left:934.5px;top:21.5px;font-size:16.5px;color:#444746;-webkit-text-stroke:0.4px #444746">A</div>
<div class="abs" style="left:928.5px;top:38.3px;width:29px;height:2px;background:#444746"></div>
<div class="abs" style="left:928.5px;top:41.5px;width:29px;height:2px;background:#444746"></div>
<div class="abs" style="left:968px;top:18.5px;width:1px;height:25px;background:#c7c7c7"></div>
<svg style="left:990px;top:24px" width="6" height="17"><circle cx="3" cy="2.5" r="2" fill="#444746"/><circle cx="3" cy="8.5" r="2" fill="#444746"/><circle cx="3" cy="14.5" r="2" fill="#444746"/></svg>
<svg style="left:1066px;top:28px" width="13" height="9"><path d="M1 1.2L6.5 6.8L12 1.2" stroke="#444746" stroke-width="1.9" fill="none"/></svg>
<div class="abs" style="left:1127px;top:6px;width:398.5px;height:946.5px;border-radius:25px 25px 19px 19px;background:#fcfcfd;border:1px solid #dcdee1"></div>
<svg style="left:1149px;top:25.3px" width="23.5" height="23.5" viewBox="0 0 22 22"><path d="M11 0.8Q13.2 8.8 21.2 11Q13.2 13.2 11 21.2Q8.8 13.2 0.8 11Q8.8 8.8 11 0.8Z" fill="#1f1f1f"/></svg>
<div class="t med" style="left:1183px;top:27.5px;font-size:21.5px;color:#1f1f1f;-webkit-text-stroke:0.4px #1f1f1f">Gemini</div>
<svg style="left:1412px;top:28.5px" width="6" height="17"><circle cx="3" cy="2.5" r="2" fill="#444746"/><circle cx="3" cy="8.5" r="2" fill="#444746"/><circle cx="3" cy="14.5" r="2" fill="#444746"/></svg>
<svg style="left:1446.5px;top:29.5px" width="16" height="16" viewBox="0 0 16 16"><path d="M9.5 1H15V6.5M1 9.5V15H6.5" stroke="#444746" stroke-width="2" fill="none"/></svg>
<svg style="left:1487px;top:30px" width="15" height="15" viewBox="0 0 15 15"><path d="M1 1L14 14M14 1L1 14" stroke="#444746" stroke-width="1.9"/></svg>
<div class="abs" style="left:1509.5px;top:72px;width:10px;height:596px;border-radius:5px;background:#c9cbcf"></div>
<div class="abs" style="left:1148.5px;top:77.5px;width:356px;height:226px;border-radius:18px;background:#e6ecf5"></div>
<svg style="left:1168px;top:96px" width="26" height="26" viewBox="0 0 26 26" stroke-linecap="round"><path d="M12.5 4.9H5.8A2 2 0 0 0 3.8 6.9V19.8A2 2 0 0 0 5.8 21.8H19.8A2 2 0 0 0 21.8 19.8V14" stroke="#1f1f1f" stroke-width="2" fill="none"/><circle cx="8.6" cy="9.2" r="1.15" fill="#1f1f1f"/><circle cx="8.6" cy="13.3" r="1.15" fill="#1f1f1f"/><circle cx="8.6" cy="17.4" r="1.15" fill="#1f1f1f"/><path d="M12.3 9.2H14.6M12.3 13.3H17.3M12.3 17.4H17.3" stroke="#1f1f1f" stroke-width="2"/><path d="M19.5 2Q20.5 5.5 24 6.5Q20.5 7.5 19.5 11Q18.5 7.5 15 6.5Q18.5 5.5 19.5 2Z" fill="#1f1f1f"/></svg>
<div class="t med" style="left:1203px;top:100px;font-size:18.5px;color:#1f1f1f;-webkit-text-stroke:0.45px #1f1f1f">Summary of this content</div>
<div class="t" style="left:1168.5px;top:140.0px;font-size:18px;color:#3c4043;letter-spacing:-0.12px">This spreadsheet, named "Finances,"</div>
<div class="t" style="left:1168.5px;top:164.8px;font-size:18px;color:#3c4043;letter-spacing:-0.12px">appears to be a financial ledger or</div>
<div class="t" style="left:1168.5px;top:189.6px;font-size:18px;color:#3c4043;letter-spacing:-0.12px">transaction record. It includes:</div>
<div class="abs" style="left:1172.5px;top:239.5px;width:5px;height:5px;border-radius:50%;background:#bfc2c6"></div>
<div class="t" style="left:1189px;top:235px;font-size:18px;color:#b5b8bd"><b>Date:</b> The date of the transaction....</div>
<svg style="left:1317px;top:271px" width="19" height="6"><circle cx="3" cy="3" r="2.3" fill="#2b3a67"/><circle cx="9.5" cy="3" r="2.3" fill="#2b3a67"/><circle cx="16" cy="3" r="2.3" fill="#2b3a67"/></svg>
<div class="t med" style="left:1153.5px;top:328.5px;font-size:14.5px;color:#1f1f1f;-webkit-text-stroke:0.45px #1f1f1f">See what Gemini can do</div>
<svg style="left:1482px;top:328.5px" width="9" height="14"><path d="M1.5 1L7.5 7L1.5 13" stroke="#1f1f1f" stroke-width="2" fill="none"/></svg>
<div class="abs" style="left:1148.5px;top:368.5px;width:356px;height:78.5px;border-radius:18px 18px 4px 4px;background:#e6ecf5"></div>
<div class="abs" style="left:1148.5px;top:450.5px;width:356px;height:79px;border-radius:4px 4px 18px 18px;background:#e6ecf5"></div>
<div class="abs" style="left:1168.5px;top:386px;width:44.5px;height:44px;border-radius:10px;background:#fafafb"></div>
<div class="abs" style="left:1168.5px;top:468px;width:44.5px;height:44px;border-radius:10px;background:#fafafb"></div>
<svg style="left:1176px;top:393px" width="28" height="28" viewBox="0 0 28 28" stroke-linecap="round" stroke-linejoin="round"><path d="M14 5.5H7A2 2 0 0 0 5 7.5V21.5A2 2 0 0 0 7 23.5H22.5A2 2 0 0 0 24.5 21.5V13.8" stroke="#1f1f1f" stroke-width="2" fill="none"/><path d="M8.2 18.8L11.8 14.8L15 17.6L20.4 12.2" stroke="#1f1f1f" stroke-width="2" fill="none"/><path d="M21 3.2Q21.9 6.6 25.3 7.5Q21.9 8.4 21 11.8Q20.1 8.4 16.7 7.5Q20.1 6.6 21 3.2Z" fill="#1f1f1f"/></svg>
<svg style="left:1176px;top:475px" width="28" height="28" viewBox="0 0 28 28" stroke-linecap="round"><path d="M23.4 15.6A8.9 8.9 0 1 1 13.8 6.3" stroke="#1f1f1f" stroke-width="2.1" fill="none"/><circle cx="14.3" cy="11.3" r="1.3" fill="#1f1f1f"/><path d="M14.3 14.6V19.6" stroke="#1f1f1f" stroke-width="2.2"/><path d="M21.5 3.5Q22.4 6.9 25.8 7.8Q22.4 8.7 21.5 12.1Q20.6 8.7 17.2 7.8Q20.6 6.9 21.5 3.5Z" fill="#1f1f1f"/></svg>
<div class="t med" style="left:1233px;top:389.5px;font-size:15px;color:#1f1f1f;letter-spacing:0.5px">Generate a chart</div>
<div class="t" style="left:1233px;top:409px;font-size:15px;color:#5f6368;letter-spacing:0.5px;-webkit-text-stroke:0.3px #5f6368">Create a chart using this data</div>
<div class="t med" style="left:1233px;top:471.5px;font-size:15px;color:#1f1f1f;letter-spacing:0.5px">Analyze for insights</div>
<div class="t" style="left:1233px;top:491px;font-size:15px;color:#5f6368;letter-spacing:0.5px;-webkit-text-stroke:0.3px #5f6368">Generate insights or trends for th...</div>
<div class="t med" style="left:1153.5px;top:555px;font-size:14.5px;color:#1f1f1f;-webkit-text-stroke:0.45px #1f1f1f">Gems</div>
<svg style="left:1482px;top:555.5px" width="9" height="14"><path d="M1.5 1L7.5 7L1.5 13" stroke="#1f1f1f" stroke-width="2" fill="none"/></svg>
<div class="abs" style="left:1148.5px;top:594.5px;width:356px;height:94px;border-radius:18px 18px 4px 4px;background:#e6ecf5"></div>
<div class="abs" style="left:1148.5px;top:692px;width:356px;height:100px;border-radius:4px 4px 18px 18px;background:#e6ecf5"></div>
<div class="abs" style="left:1168.5px;top:619px;width:45.5px;height:46px;border-radius:50%;background:#c5c7d5"></div>
<div class="abs" style="left:1168.5px;top:716.5px;width:45.5px;height:46px;border-radius:50%;background:#c6d86c"></div>
<svg style="left:1179px;top:630px" width="24" height="24" viewBox="0 0 24 24"><path d="M2.5 7V20.5A1 1 0 0 0 3.5 21.5H17" stroke="#5f6270" stroke-width="2.1" fill="none"/><rect x="7" y="2.5" width="14.5" height="14.5" rx="1.3" stroke="#5f6270" stroke-width="2.1" fill="none"/><circle cx="14.25" cy="7.6" r="2.1" fill="#5f6270"/><path d="M9.6 14.2C10.6 11.6 17.9 11.6 18.9 14.2V15H9.6Z" fill="#5f6270"/></svg>
<svg style="left:1179px;top:727px" width="24" height="24" viewBox="0 0 24 24"><path d="M3.5 2.5H20.5A1 1 0 0 1 21.5 3.5V16.5A1 1 0 0 1 20.5 17.5H7L2.5 22V3.5A1 1 0 0 1 3.5 2.5Z" stroke="#5d6356" stroke-width="2.1" fill="none" stroke-linejoin="round"/><circle cx="12" cy="7.8" r="2.2" fill="#5d6356"/><path d="M7.3 13.8C8.2 11.3 15.8 11.3 16.7 13.8V14.4H7.3Z" fill="#5d6356"/></svg>
<div class="t med" style="left:1233px;top:614px;font-size:15px;color:#1f1f1f;letter-spacing:0.5px">Sentiment analyzer</div>
<div class="t" style="left:1233px;top:634px;font-size:15px;color:#5f6368;letter-spacing:0.5px;-webkit-text-stroke:0.3px #5f6368">Analyze customer feedback to</div>
<div class="t" style="left:1233px;top:653.5px;font-size:15px;color:#5f6368;letter-spacing:0.5px;-webkit-text-stroke:0.3px #5f6368">reveal trends and make...</div>
<div class="t med" style="left:1233px;top:711px;font-size:15px;color:#1f1f1f;letter-spacing:0.5px">Outreach specialist</div>
<div class="t" style="left:1233px;top:731px;font-size:15px;color:#5f6368;letter-spacing:0.5px;-webkit-text-stroke:0.3px #5f6368">Craft personalized messages to</div>
<div class="t" style="left:1233px;top:750.5px;font-size:15px;color:#5f6368;letter-spacing:0.5px;-webkit-text-stroke:0.3px #5f6368">potential customers, build...</div>
<div class="abs" style="left:1127px;top:776.5px;width:398.5px;height:176px;border-radius:20px 20px 19px 19px;background:#fcfcfd;border:1px solid #dcdee1"></div>
<div class="abs" style="left:1148.5px;top:797px;width:356px;height:75px;border-radius:37.5px;background:#e6ecf5"></div>
<div class="t" style="left:1173.5px;top:825px;font-size:20px;color:#72767b;letter-spacing:0.2px">Enter a prompt here</div>
<div class="t" style="left:1127.5px;width:398.5px;text-align:center;top:894px;font-size:14.5px;color:#5f6368;-webkit-text-stroke:0.3px #5f6368">Gemini in Workspace can make mistakes,</div>
<div class="t" style="left:1194.5px;top:913.5px;font-size:14.5px;color:#5f6368;-webkit-text-stroke:0.3px #5f6368">so double-check responses. <span class="med" style="color:#1f1f1f;text-decoration:underline;text-underline-offset:3px;letter-spacing:0.3px;-webkit-text-stroke:0.4px #1f1f1f">Learn more</span></div>
<svg style="left:1294px;top:864px" width="14" height="21" viewBox="0 0 14 21"><path d="M1 1V16.5L4.8 13L7.5 19.5L10 18.5L7.4 12.2H12.5Z" fill="#111" stroke="#fff" stroke-width="1"/></svg>
</body></html>
